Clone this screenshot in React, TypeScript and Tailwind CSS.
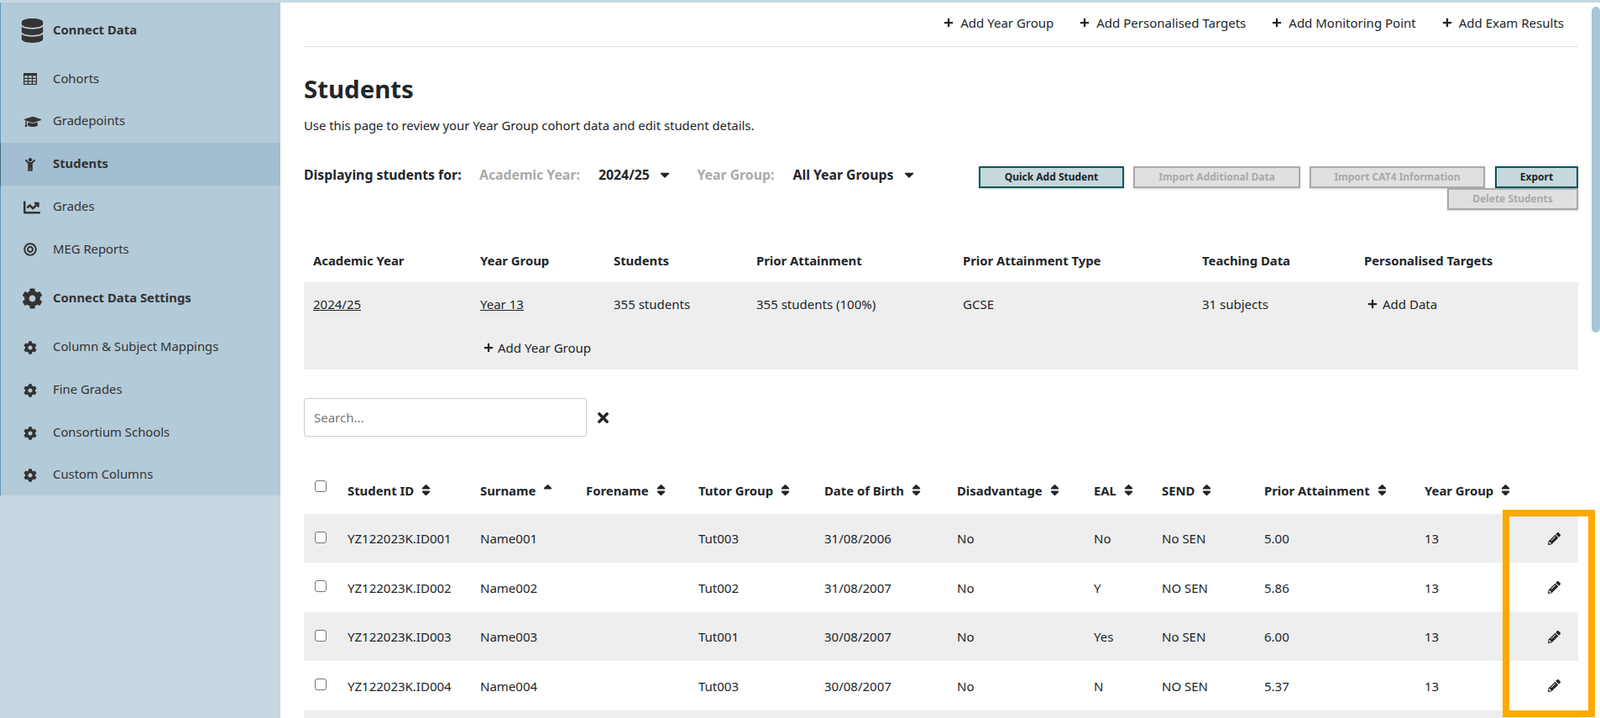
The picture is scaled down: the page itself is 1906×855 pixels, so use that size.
import React from "react";
import {
  FaDatabase, FaGraduationCap, FaChild, FaChartLine, FaBullseye, FaCog, FaPlus, FaTimes, FaPencilAlt, FaSort, FaSortUp, FaCaretDown,
} from "react-icons/fa";

function GridIcon() {
  return (
    <svg viewBox="0 0 16 14" className="h-[14px] w-[16px]" fill="none" stroke="#333" strokeWidth="1.2">
      <rect x="0.6" y="0.6" width="14.8" height="12.8" />
      <path d="M0.6 6.3H15.4M0.6 9.8H15.4M5.5 0.6V13.4M10.5 0.6V13.4" />
      <rect x="0" y="0" width="16" height="3.2" fill="#333" stroke="none" />
    </svg>
  );
}

const side = [
  { t: "Connect Data", h: true, i: <FaDatabase className="text-[29px]" />, y: "h-[66px]", p: "pl-[12px]" },
  { t: "Cohorts", i: <GridIcon />, y: "h-[50px]", p: "pl-[8px]" },
  { t: "Gradepoints", i: <FaGraduationCap className="text-[20px]" />, y: "h-[51px]", p: "pl-[14px]" },
  { t: "Students", active: true, i: <FaChild className="text-[16px]" />, y: "h-[51px]", p: "pl-[8px]" },
  { t: "Grades", i: <FaChartLine className="text-[20px]" />, y: "h-[51px]", p: "pl-[11px]" },
  { t: "MEG Reports", i: <FaBullseye className="text-[16px]" />, y: "h-[50px]", p: "pl-[8px]" },
  { t: "Connect Data Settings", h: true, i: <FaCog className="text-[25px]" />, y: "h-[66px]", p: "pl-[12px]" },
  { t: "Column & Subject Mappings", i: <FaCog className="text-[16px]" />, y: "h-[51px]", p: "pl-[8px]" },
  { t: "Fine Grades", i: <FaCog className="text-[16px]" />, y: "h-[51px]", p: "pl-[8px]" },
  { t: "Consortium Schools", i: <FaCog className="text-[16px]" />, y: "h-[51px]", p: "pl-[8px]" },
  { t: "Custom Columns", i: <FaCog className="text-[16px]" />, y: "h-[49px]", p: "pl-[8px]" },
];

const cols = ["w-[52px]", "w-[158px]", "w-[126px]", "w-[134px]", "w-[150px]", "w-[158px]", "w-[163px]", "w-[81px]", "w-[122px]", "w-[191px]", "w-[137px]", "w-[46px]"];

const heads: [string, boolean?][] = [
  ["Student ID"], ["Surname", true], ["Forename"], ["Tutor Group"], ["Date of Birth"], ["Disadvantage"], ["EAL"], ["SEND"], ["Prior Attainment"], ["Year Group"],
];

const rows = [
  ["YZ122023K.ID001", "Name001", "", "Tut003", "31/08/2006", "No", "No", "No SEN", "5.00", "13"],
  ["YZ122023K.ID002", "Name002", "", "Tut002", "31/08/2007", "No", "Y", "NO SEN", "5.86", "13"],
  ["YZ122023K.ID003", "Name003", "", "Tut001", "30/08/2007", "No", "Yes", "No SEN", "6.00", "13"],
  ["YZ122023K.ID004", "Name004", "", "Tut003", "30/08/2007", "No", "N", "NO SEN", "5.37", "13"],
];

const rowH = ["h-[58px] bg-[#eeeeee]", "h-[59px]", "h-[58px] bg-[#eeeeee]", "h-[59px]"];

const summaryCols = "grid-cols-[199px_159px_170px_246px_285px_193px_1fr]";

function Btn({ children, on, className = "" }: { children: React.ReactNode; on?: boolean; className?: string }) {
  return (
    <button
      className={
        "h-[26px] border-2 text-[12px] font-bold leading-none shadow-[0_1px_2px_rgba(0,0,0,0.2)] " +
        (on ? "border-[#04585c] bg-[#c5d8dc] text-[#212529] " : "border-[#aaaaaa] bg-[#e0e0e0] text-[#aaaaaa] ") +
        className
      }
    >
      {children}
    </button>
  );
}

function AddLink({ children, className = "" }: { children: React.ReactNode; className?: string }) {
  return (
    <span className={"flex items-center gap-[8px] text-[#212529] " + className}>
      <FaPlus className="text-[12px]" />
      {children}
    </span>
  );
}

export default function App() {
  return (
    <div className="relative flex h-screen w-full overflow-hidden bg-white text-[15px] text-[#212529] [font-family:'Open_Sans',sans-serif]">
      <div className="absolute left-0 right-0 top-0 h-[3px] bg-[#c5d7e1]" />
      <aside className="h-full w-[334px] shrink-0 bg-[#c5d7e1] pt-[3px]">
        <nav className="border-l border-[#5f96b8] bg-[#b3cad8] text-[14.85px] text-[#333333]">
          {side.map((s) => (
            <div key={s.t} className={"flex items-center " + s.y + (s.active ? " -ml-px border-l border-[#3f6c85] bg-[#a3bed0] font-bold" : "") + (s.h ? " font-bold" : "")}>
              <span className={"flex w-[62px] shrink-0 items-center justify-center " + s.p}>{s.i}</span>
              <span className="mb-[2px]">{s.t}</span>
            </div>
          ))}
        </nav>
      </aside>

      <main className="w-[1546px] shrink-0 pl-[28px] pt-[3px]">
        <div className="flex h-[53px] items-center justify-end gap-[31px] border-b border-[#dddddd] pb-[4px] pr-[17px]">
          <AddLink>Add Year Group</AddLink>
          <AddLink>Add Personalised Targets</AddLink>
          <AddLink>Add Monitoring Point</AddLink>
          <AddLink>Add Exam Results</AddLink>
        </div>

        <h1 className="mt-[31px] text-[29.4px] font-bold leading-[38px]">Students</h1>
        <p className="mt-[14px] text-[14.85px] leading-[20px]">Use this page to review your Year Group cohort data and edit student details.</p>

        <div className="relative mt-[39px] h-[80px] w-[1518px]">
          <div className="flex items-center text-[15.8px] font-bold leading-[20px]">
            <span className="w-[209px]">Displaying students for:</span>
            <span className="w-[142px] text-[#aaaaaa]">Academic Year:</span>
            <span className="w-[73px]">2024/25</span>
            <span className="w-[44.5px]"><FaCaretDown className="-ml-[3px] text-[18px]" /></span>
            <span className="w-[114px] text-[#aaaaaa]">Year Group:</span>
            <span className="w-[132.5px] whitespace-nowrap">All Year Groups</span>
            <FaCaretDown className="-ml-[3px] text-[18px]" />
          </div>
          <div className="absolute right-0 top-0 flex w-[720px] flex-wrap justify-end gap-x-[11px]">
            <Btn on className="w-[173px]">Quick Add Student</Btn>
            <Btn className="w-[199px]">Import Additional Data</Btn>
            <Btn className="w-[209px]">Import CAT4 Information</Btn>
            <Btn on className="ml-[1px] w-[99px]">Export</Btn>
            <Btn className="w-[156px]">Delete Students</Btn>
          </div>
        </div>

        <div className="mt-[8px] w-[1518px]">
          <div className={"grid h-[50px] items-center pb-[2px] pl-[11px] text-[14.85px] font-bold " + summaryCols}>
            <span>Academic Year</span><span>Year Group</span><span>Students</span><span>Prior Attainment</span><span>Prior Attainment Type</span><span>Teaching Data</span><span>Personalised Targets</span>
          </div>
          <div className="h-[104px] bg-[#eeeeee] pl-[11px]">
            <div className={"grid h-[52px] items-center " + summaryCols}>
              <span className="underline">2024/25</span><span className="underline">Year 13</span><span>355 students</span><span>355 students (100%)</span><span>GCSE</span><span>31 subjects</span>
              <AddLink className="!gap-[6px] pl-[4px]">Add Data</AddLink>
            </div>
            <div className="grid h-[52px] grid-cols-[199px_1fr] items-center">
              <span />
              <AddLink className="pl-[4px] !gap-[5px]">Add Year Group</AddLink>
            </div>
          </div>
        </div>

        <div className="mt-[34px] flex items-center gap-[10px]">
          <input readOnly placeholder="Search..." className="h-[46px] w-[337px] rounded-[3px] border border-[#cccccc] px-[11px] text-[15px] outline-none placeholder:text-[#777777]" />
          <FaTimes className="text-[19px]" />
        </div>

        <table className="mt-[36px] w-[1518px] table-fixed border-collapse">
          <colgroup>{cols.map((c, i) => <col key={i} className={c} />)}</colgroup>
          <thead>
            <tr className="h-[56px] text-left">
              <th className="pl-[13px] align-middle"><span className="mb-[10px] block h-[14px] w-[14px] rounded-[3px] border border-[#767676] bg-white" /></th>
              {heads.map(([h, asc]) => (
                <th key={h} className="text-[14.85px] font-bold whitespace-nowrap">
                  <span className="inline-flex items-center gap-[6px]">
                    {h}
                    {asc ? <FaSortUp className="text-[17px] text-[#212529]" /> : <FaSort className="text-[17px] text-[#212529]" />}
                  </span>
                </th>
              ))}
              <th />
            </tr>
          </thead>
          <tbody>
            {rows.map((r, i) => (
              <tr key={i} className={rowH[i]}>
                <td className="pl-[13px]"><span className="mb-[3px] block h-[14px] w-[14px] rounded-[3px] border border-[#767676] bg-white" /></td>
                {r.map((c, j) => <td key={j} className={"whitespace-nowrap " + (i % 2 ? "pt-[2px]" : "")}>{c}</td>)}
                <td><FaPencilAlt className="ml-[10px] text-[15px]" /></td>
              </tr>
            ))}
            <tr className="h-[58px] bg-[#eeeeee]"><td colSpan={12} /></tr>
          </tbody>
        </table>
      </main>

      <div className="absolute right-0 top-[8px] h-[388px] w-[10px] rounded-[5px] bg-[#a8c6d7]" />
      <div className="absolute left-[1790px] top-[607px] h-[247px] w-[110px] border-[8px] border-[#ffa800]" />
    </div>
  );
}
